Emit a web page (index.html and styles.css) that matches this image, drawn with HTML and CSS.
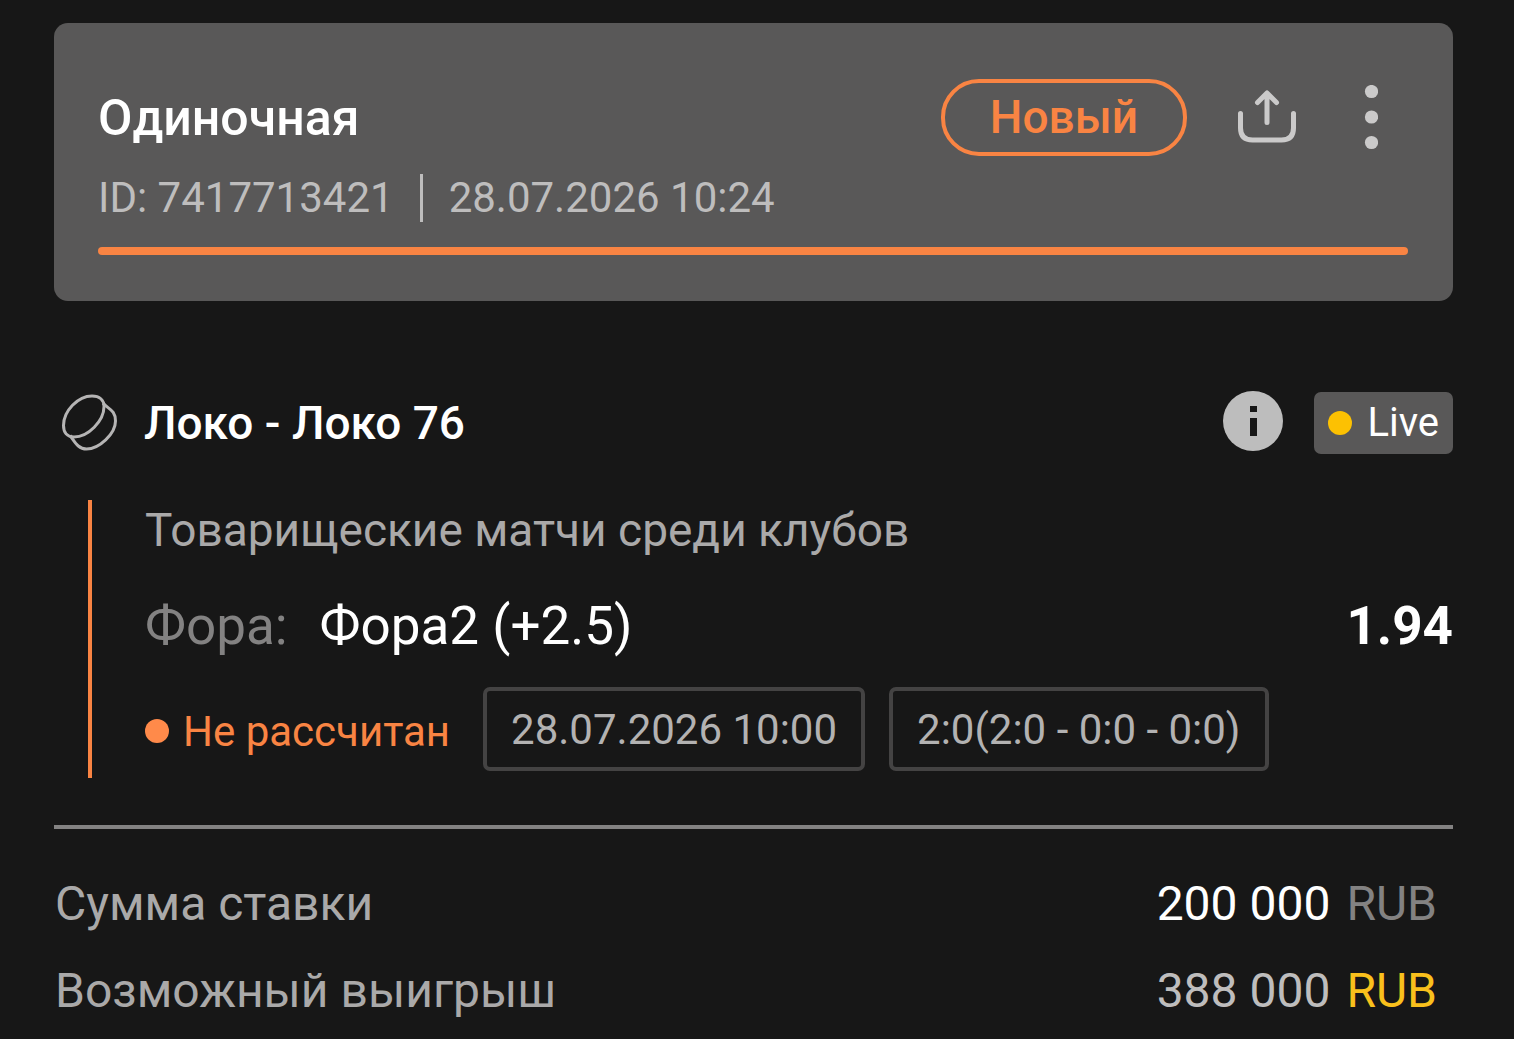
FILE: index.html
```html
<!DOCTYPE html>
<html lang="ru">
<head>
  <meta charset="UTF-8">
  <meta name="viewport" content="width=device-width, initial-scale=1">
  <title>Одиночная</title>
  <link rel="stylesheet" href="styles.css">
</head>
<body>
  <main class="bet">
    <header class="card">
      <div class="card-top">
        <h1>Одиночная</h1>
        <span class="pill">Новый</span>
        <button type="button" class="icon-btn" aria-label="Поделиться">
          <svg width="60" height="58" viewBox="0 0 60 58" fill="none" stroke="currentColor" stroke-width="5" stroke-linecap="round" stroke-linejoin="round">
            <path d="M3.500 24.500V39q0 12 12 12h29q12 0 12-12V24.500"/>
            <path d="M30 33.500V5M20.500 13.500 30 4l9.500 9.500"/>
          </svg>
        </button>
        <button type="button" class="icon-btn" aria-label="Меню">
          <svg width="14" height="66" viewBox="0 0 14 66" fill="currentColor">
            <circle cx="7.500" cy="6.500" r="6.600"/>
            <circle cx="7.500" cy="32" r="6.600"/>
            <circle cx="7.500" cy="57.500" r="6.600"/>
          </svg>
        </button>
      </div>
      <div class="meta">
        <span>ID: 7417713421</span>
        <time datetime="2026-07-28T10:24">28.07.2026 10:24</time>
      </div>
      <div class="bar"></div>
    </header>

    <section class="event">
      <div class="event-top">
        <svg class="puck" width="56" height="58" viewBox="0 0 56 58" fill="none" stroke="currentColor" stroke-width="3" stroke-linejoin="round">
          <path d="M31 2C17 2 2.500 17 2.500 31.500 2.500 38.500 6 43 13 43 27 43 43 27 43 12.500 43 6 38.500 2 31 2Z"/>
          <path d="M42 9C46.500 15 54.500 15.500 54.500 27 54.500 40 38 55 25.500 55 17 55 14 48 9 41.500"/>
        </svg>
        <h2>Локо - Локо 76</h2>
        <button type="button" class="info" aria-label="Информация">
          <svg width="60" height="60" viewBox="0 0 60 60">
            <circle cx="30" cy="30" r="30" fill="#bdbdbd"/>
            <path d="M27 15h7v6h-7zM27 27h7v18h-7z" fill="#171717"/>
          </svg>
        </button>
        <span class="live"><i class="dot yellow"></i>Live</span>
      </div>

      <div class="details">
        <p class="league">Товарищеские матчи среди клубов</p>
        <div class="pick">
          <span class="pick-label">Фора:</span>
          <span>Фора2 (+2.5)</span>
          <strong>1.94</strong>
        </div>
        <div class="status">
          <span class="state"><i class="dot"></i>Не рассчитан</span>
          <time class="box" datetime="2026-07-28T10:00">28.07.2026 10:00</time>
          <span class="box">2:0(2:0 - 0:0 - 0:0)</span>
        </div>
      </div>
    </section>

    <dl class="totals">
      <div class="total">
        <dt>Сумма ставки</dt>
        <dd class="stake">200 000 <span>RUB</span></dd>
      </div>
      <div class="total">
        <dt>Возможный выигрыш</dt>
        <dd class="win">388 000 <span>RUB</span></dd>
      </div>
    </dl>
  </main>
</body>
</html>
```
FILE: styles.css
```css
* {
  box-sizing: border-box;
}

body {
  margin: 0;
  background: #171717;
  color: #fff;
  font-family: Roboto, "Liberation Sans", sans-serif;
}

h1,
h2,
p,
dl,
dd {
  margin: 0;
}

button {
  padding: 0;
  border: 0;
  background: none;
  cursor: pointer;
}

.bet {
  padding: 23px 61px 0 54px;
}

/* header card */
.card {
  padding: 56px 45px 46px 44px;
  border-radius: 14px;
  background: #595858;
}

.card-top {
  display: flex;
  align-items: center;
  gap: 30px;
}

h1 {
  flex: 1;
  font-size: 50px;
  line-height: 76px;
  font-weight: 500;
}

.pill {
  margin-right: 13px;
  padding: 0 45px;
  border: 4px solid #f98443;
  border-radius: 38px;
  color: #f98443;
  font-size: 46px;
  line-height: 69px;
  font-weight: 500;
}

.icon-btn {
  display: flex;
  justify-content: center;
  align-items: center;
  width: 74px;
  color: #cbcaca;
}

.meta {
  display: flex;
  align-items: center;
  margin: 18px 0 25px;
  color: #bebdbd;
  font-size: 42px;
  line-height: 48px;
}

.meta time {
  margin-left: 26px;
  padding-left: 26px;
  border-left: 3px solid #bebdbd;
}

.bar {
  height: 8px;
  border-radius: 4px;
  background: #f98443;
}

/* event */
.event {
  padding: 88px 0 47px;
}

.event-top {
  display: flex;
  align-items: center;
  gap: 31px;
}

.puck {
  margin: 0 -4px 0 7px;
  color: #b5b4b4;
}

h2 {
  flex: 1;
  font-size: 46px;
  line-height: 68px;
  font-weight: 500;
}

.info {
  padding-bottom: 4px;
}

.info,
.info svg {
  display: block;
}

.live {
  display: flex;
  align-items: center;
  gap: 15px;
  padding: 0 14px;
  border-radius: 7px;
  background: #595858;
  font-size: 40px;
  line-height: 62px;
}

.dot {
  width: 24px;
  height: 24px;
  border-radius: 50%;
  background: #ff8a4a;
}

.dot.yellow {
  background: #fcc102;
}

.details {
  margin: 43px 0 0 34px;
  padding: 0 0 7px 53px;
  border-left: 4px solid #f98443;
}

.league {
  color: #aaa9a9;
  font-size: 46px;
  line-height: 60px;
}

.pick {
  display: flex;
  align-items: center;
  gap: 32px;
  margin: 32px 0 27px;
  font-size: 53px;
  line-height: 68px;
}

.pick-label {
  color: #838282;
}

.pick strong {
  margin-left: auto;
  font-weight: 700;
}

.status {
  display: flex;
  align-items: center;
  gap: 24px;
  font-size: 42px;
}

.state {
  display: flex;
  align-items: center;
  gap: 14px;
  margin-right: 9px;
  padding-top: 4px;
  color: #f98443;
}

.box {
  padding: 1px 24px 0;
  border: 4px solid #444343;
  border-radius: 7px;
  color: #b3b2b2;
  line-height: 75px;
}

/* totals */
.totals {
  padding: 31px 16px 0 1px;
  border-top: 4px solid #838282;
  font-size: 48px;
  line-height: 87px;
}

.total {
  display: flex;
  justify-content: space-between;
}

.total dd {
  display: flex;
  gap: 16px;
}

dt {
  color: #aaa9a9;
}

.stake span {
  color: #838282;
}

.win {
  color: #bebdbd;
}

.win span {
  color: #f9c01c;
}
```
